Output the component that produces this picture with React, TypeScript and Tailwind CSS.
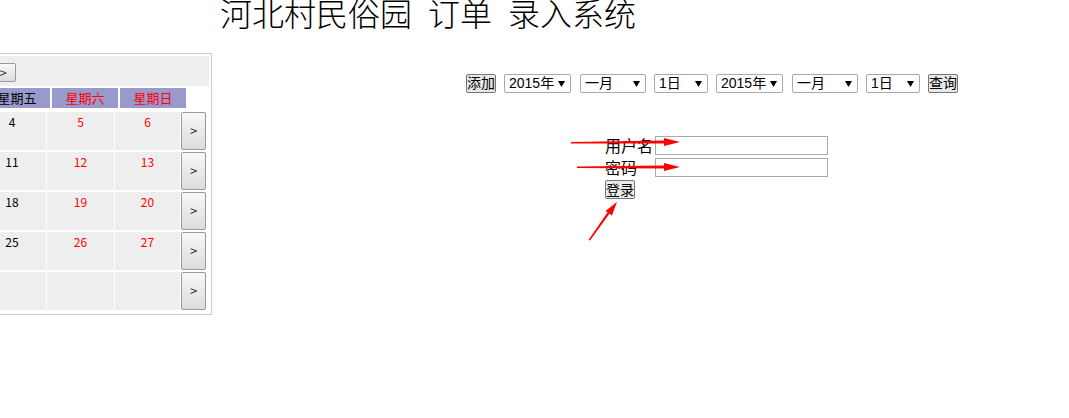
import React from 'react';

const cjk = "font-['Noto_Sans_CJK_SC',sans-serif]";
const ui = "font-['Liberation_Sans','Noto_Sans_CJK_SC',sans-serif]";

function Caret() {
  return (
    <svg width="7" height="6" viewBox="0 0 7 6" className="shrink-0">
      <polygon points="0,0 7,0 3.5,6" fill="#000" />
    </svg>
  );
}

function Select({ label, w }: { label: string; w: string }) {
  return (
    <div
      className={`${w} h-[19px] flex items-center justify-between border border-[#a9a9a9] rounded-[2px] bg-white pl-[4px] pr-[5px] text-[14px] leading-[17px] text-black`}
    >
      <span>{label}</span>
      <Caret />
    </div>
  );
}

function GrayButton({ label, className = '' }: { label: string; className?: string }) {
  return (
    <button
      className={`h-[19px] w-[30px] flex items-center justify-center border border-[#767676] rounded-[2px] bg-[#e9e9e9] text-[14px] leading-[17px] text-black ${className}`}
    >
      {label}
    </button>
  );
}

function Toolbar() {
  return (
    <div className={`flex items-center gap-[8px] ${ui}`}>
      <GrayButton label="添加" />
      <Select label="2015年" w="w-[67px]" />
      <div className="ml-[1px]">
        <Select label="一月" w="w-[66px]" />
      </div>
      <Select label="1日" w="w-[54px]" />
      <Select label="2015年" w="w-[67px]" />
      <div className="ml-[1px]">
        <Select label="一月" w="w-[66px]" />
      </div>
      <Select label="1日" w="w-[54px]" />
      <GrayButton label="查询" />
    </div>
  );
}

function LoginForm() {
  return (
    <div className={`flex flex-col gap-[3px] ${cjk}`}>
      <div className="flex h-[19px] items-center">
        <span className="w-[50px] text-[16px] leading-[19px] text-black">用户名</span>
        <input className="w-[173px] h-[19px] border border-[#a9a9a9] bg-white outline-none" />
      </div>
      <div className="flex h-[19px] items-center">
        <span className="w-[50px] text-[16px] leading-[19px] text-black">密码</span>
        <input type="password" className="w-[173px] h-[19px] border border-[#a9a9a9] bg-white outline-none" />
      </div>
      <div className="flex h-[19px] items-center">
        <GrayButton label="登录" />
      </div>
    </div>
  );
}

const rows = [
  ['4', '5', '6'],
  ['11', '12', '13'],
  ['18', '19', '20'],
  ['25', '26', '27'],
  ['', '', ''],
];

function ArrowBtn({ className = '' }: { className?: string }) {
  return (
    <button
      className={`flex items-center justify-center border border-[#999] rounded-[2px] bg-gradient-to-b from-[#f8f8f8] to-[#dcdcdc] text-[13px] text-[#333] ${className}`}
    >
      &gt;
    </button>
  );
}

function Calendar() {
  return (
    <div className={`w-[212px] h-[262px] shrink-0 overflow-hidden border-t border-b border-r border-[#cccccc] pt-[2px] pr-[2px] ${cjk}`}>
      <div className="h-[30px] bg-[#eeeeee] flex items-start">
        <ArrowBtn className="ml-[-10px] mt-[7px] w-[26px] h-[19px] leading-[17px]" />
      </div>
      <div className="mt-[2px] flex gap-[2px] h-[20px] text-[13px] leading-[20px]">
        <div className="ml-[-16px] w-[66px] shrink-0 bg-[#9999cc] text-center text-black">星期五</div>
        <div className="w-[66px] shrink-0 bg-[#9999cc] text-center text-[#ff0000]">星期六</div>
        <div className="w-[66px] shrink-0 bg-[#9999cc] text-center text-[#ff0000]">星期日</div>
      </div>
      <div className="mt-[4px] flex flex-col gap-[2px]">
        {rows.map((r, i) => (
          <div key={i} className="flex gap-[1px] h-[38px] text-[12px] leading-[16px]">
            <div className="ml-[-22px] w-[68px] shrink-0 bg-[#eeeeee] text-center pt-[2px] text-black">{r[0]}</div>
            <div className="w-[67px] shrink-0 bg-[#eeeeee] text-center pt-[2px] text-[#ff0000]">{r[1]}</div>
            <div className="w-[65px] shrink-0 bg-[#eeeeee] text-center pt-[2px] text-[#ff0000]">{r[2]}</div>
            <ArrowBtn className="w-[25px] h-[38px] shrink-0" />
          </div>
        ))}
      </div>
    </div>
  );
}

function Annotations() {
  return (
    <svg className="absolute left-0 top-0 pointer-events-none" width="1069" height="418">
      <polygon points="571,142 664,140.5 664,138 680,142 664,146 664,143.5 571,143.5" fill="#ff0000" />
      <polygon points="577,166.5 664,165.5 664,163 680,167 664,171 664,168.5 577,168" fill="#ff0000" />
      <polygon points="588.5,240 607.6,212.2 605.5,210.9 617,202 611.9,215.7 609.6,213.6 590,240.6" fill="#ff0000" />
    </svg>
  );
}

export default function App() {
  return (
    <div className="relative w-[1069px] h-[418px] bg-white overflow-hidden">
      <div className="h-[53px] pl-[220px]">
        <h1 className={`text-[32px] leading-[24px] font-light text-black whitespace-nowrap ${cjk}`}>
          河北村民俗园<span className="inline-block w-[16px]" />订单<span className="inline-block w-[16px]" />录入系统
        </h1>
      </div>
      <div className="flex">
        <Calendar />
        <div className="flex-1">
          <div className="pt-[21px] pl-[254px]">
            <Toolbar />
          </div>
          <div className="pt-[43px] pl-[393px]">
            <LoginForm />
          </div>
        </div>
      </div>
      <Annotations />
    </div>
  );
}
